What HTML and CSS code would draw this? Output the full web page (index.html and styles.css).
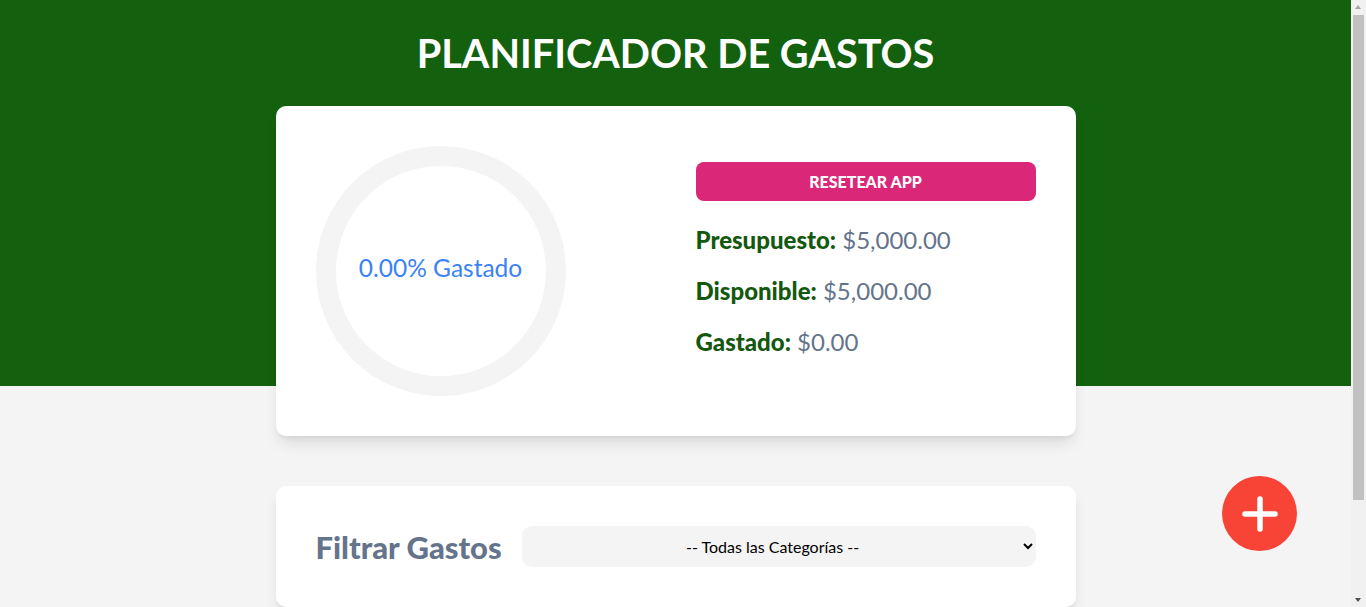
FILE: index.html
```html
<!DOCTYPE html>
<html lang="es">
<head>
<meta charset="utf-8">
<title>Planificador de Gastos</title>
<link rel="stylesheet" href="styles.css">
</head>
<body>
<div class="page">
  <header class="header">
    <h1 class="title">PLANIFICADOR DE GASTOS</h1>
    <div class="budget-card">
      <div class="chart">
        <svg class="ring" width="250" height="250" viewBox="0 0 250 250">
          <circle cx="125" cy="125" r="115" fill="none" stroke="#f4f4f4" stroke-width="20"/>
        </svg>
        <span class="chart-text">0.00% Gastado</span>
      </div>
      <div class="summary">
        <button class="reset-btn" type="button">RESETEAR APP</button>
        <p class="line"><span class="label">Presupuesto:</span> $5,000.00</p>
        <p class="line"><span class="label">Disponible:</span> $5,000.00</p>
        <p class="line"><span class="label">Gastado:</span> $0.00</p>
      </div>
    </div>
  </header>
  <main class="main">
    <section class="filter-card">
      <label class="filter-label" for="filtro">Filtrar Gastos</label>
      <select class="filter-select" id="filtro">
        <option>-- Todas las Categorías --</option>
        <option>Ahorro</option>
        <option>Comida</option>
        <option>Casa</option>
      </select>
    </section>
  </main>
</div>
<button class="add-btn" type="button" aria-label="Nuevo gasto">
  <svg width="36" height="36" viewBox="0 0 36 36">
    <path d="M18 3 V33 M3 18 H33" stroke="#fff" stroke-width="5.5" stroke-linecap="round" fill="none"/>
  </svg>
</button>
<div class="scrollbar" aria-hidden="true">
  <span class="arrow-up"></span>
  <span class="thumb"></span>
  <span class="arrow-down"></span>
</div>
</body>
</html>
```
FILE: styles.css
```css
* { box-sizing: border-box; }
html, body { scrollbar-width: none; }
body {
  margin: 0;
  background: #f4f4f4;
  font-family: Lato, "Noto Sans", sans-serif;
}
.page {
  margin-right: 15px;
}
.header {
  background: #13610e;
  height: 386px;
  padding-top: 28px;
}
.title {
  margin: 0 0 28px;
  text-align: center;
  color: #fff;
  font-size: 39.7px;
  line-height: 50px;
  font-weight: 700;
}
.budget-card {
  width: 800px;
  margin: 0 auto;
  background: #fff;
  border-radius: 10px;
  padding: 40px;
  display: grid;
  grid-template-columns: 1fr 1fr;
  gap: 40px;
  box-shadow: 0 10px 15px -3px rgba(0,0,0,0.1), 0 4px 6px -4px rgba(0,0,0,0.1);
  position: relative;
}
.chart {
  width: 250px;
  height: 250px;
  position: relative;
  display: flex;
  align-items: center;
  justify-content: center;
}
.ring { position: absolute; left: 0; top: 0; }
.chart-text {
  position: relative;
  color: #3b82f6;
  font-size: 24.5px;
  margin-top: -8px;
}
.summary {
  padding-top: 16px;
  display: flex;
  flex-direction: column;
}
.reset-btn {
  height: 39px;
  border: none;
  border-radius: 8px;
  background: #db2777;
  color: #fff;
  font-family: Lato, sans-serif;
  font-weight: 900;
  font-size: 16px;
  padding-bottom: 2px;
  margin-bottom: 21px;
}
.line {
  margin: 0 0 15px;
  font-size: 24px;
  line-height: 36px;
  color: #64748b;
}
.label {
  color: #14580f;
  font-weight: 900;
}
.main {
  padding: 100px 0 115px;
}
.filter-card {
  width: 800px;
  margin: 0 auto;
  background: #fff;
  border-radius: 10px;
  padding: 40px;
  display: flex;
  align-items: center;
  gap: 20px;
  box-shadow: 0 10px 15px -3px rgba(0,0,0,0.1), 0 4px 6px -4px rgba(0,0,0,0.1);
}
.filter-label {
  color: #64748b;
  font-size: 31px;
  font-weight: 900;
}
.filter-select {
  flex: 1;
  height: 41px;
  border: none;
  border-radius: 10px;
  background: #f4f4f4;
  text-align: center;
  font-family: Lato, sans-serif;
  font-size: 16px;
  color: #000;
  padding: 0 8px;
}
.add-btn {
  position: fixed;
  right: 69px;
  bottom: 56px;
  width: 75px;
  height: 75px;
  border-radius: 50%;
  border: none;
  background: #f74437;
  display: flex;
  align-items: center;
  justify-content: center;
  padding: 0;
}
.scrollbar {
  position: fixed;
  top: 0;
  right: 0;
  width: 15px;
  height: 100%;
  background: #f1f1f1;
}
.arrow-up, .arrow-down {
  position: absolute;
  left: 4px;
  width: 0;
  height: 0;
  border-left: 3.5px solid transparent;
  border-right: 3.5px solid transparent;
}
.arrow-up {
  top: 5px;
  border-bottom: 4px solid #a3a3a3;
}
.arrow-down {
  bottom: 5px;
  border-top: 4px solid #505050;
}
.thumb {
  position: absolute;
  top: 15px;
  left: 2px;
  width: 11px;
  height: 485px;
  background: #c1c1c1;
}
```
